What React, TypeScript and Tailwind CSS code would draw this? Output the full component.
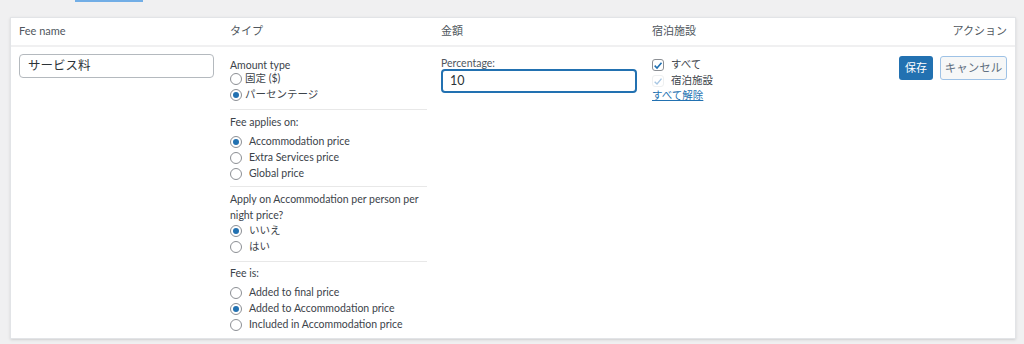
import React from 'react';

const font = { fontFamily: 'Lato, "Noto Sans CJK JP", sans-serif' };

function Radio({ checked, label, gap = 'gap-[7px]' }: { checked?: boolean; label: string; gap?: string }) {
  return (
    <label className={`flex items-center ${gap} h-4`}>
      <span className="w-[12px] h-[12px] rounded-full border border-[#8c8f94] bg-white flex items-center justify-center shrink-0">
        {checked && <span className="w-[6px] h-[6px] rounded-full bg-[#2271b1]" />}
      </span>
      <span>{label}</span>
    </label>
  );
}

function Group({
  title,
  children,
  cls,
  gap,
}: {
  title: React.ReactNode;
  children: React.ReactNode;
  cls: string;
  gap: string;
}) {
  return (
    <div className={cls}>
      <div className={`leading-4 whitespace-nowrap ${gap}`}>{title}</div>
      {children}
    </div>
  );
}

export default function App() {
  return (
    <div className="w-[1024px] h-[344px] bg-[#f0f0f1] text-[10.5px] text-[#3c434a] overflow-hidden" style={font}>
      <div className="h-[17px] pl-[75px]">
        <div className="w-[68px] h-[2px] bg-[#72aee6]" />
      </div>
      <div className="mx-[10px] w-[1006px] bg-white border border-[#e2e4e7] shadow-sm">
        <div className="grid grid-cols-[211px_211px_211px_211px_1fr] h-[29px] items-center border-b-2 border-[#f0f0f1] text-[11px] text-[#50575e]">
          <div className="px-2">Fee name</div>
          <div className="px-2">タイプ</div>
          <div className="px-2">金額</div>
          <div className="px-2">宿泊施設</div>
          <div className="px-2 text-right">アクション</div>
        </div>
        <div className="grid grid-cols-[211px_211px_211px_211px_1fr] pt-[7px] pb-[5px]">
          <div className="px-2">
            <div className="w-[195px] h-[24px] border border-[#b4b9be] rounded-[4px] flex items-center px-2 text-[12.5px] text-[#2c3338]">
              サービス料
            </div>
          </div>
          <div className="px-2 pt-[3px] w-[213px]">
            <Group title="Amount type" gap="-mb-[2px]" cls="pb-[6px] border-b border-[#e8e8e8]">
              <Radio label="固定 ($)" gap="gap-[3px]" />
              <Radio checked label="パーセンテージ" gap="gap-[3px]" />
            </Group>
            <Group title="Fee applies on:" gap="mb-[4px]" cls="pt-[4px] pb-[4px] border-b border-[#e8e8e8]">
              <Radio checked label="Accommodation price" />
              <Radio label="Extra Services price" />
              <Radio label="Global price" />
            </Group>
            <Group
              title={<>Apply on Accommodation per person per<br />night price?</>}
              gap=""
              cls="pt-[4px] pb-[6px] border-b border-[#e8e8e8]"
            >
              <Radio checked label="いいえ" />
              <Radio label="はい" />
            </Group>
            <Group title="Fee is:" gap="mb-[4px]" cls="pt-[3px]">
              <Radio label="Added to final price" />
              <Radio checked label="Added to Accommodation price" />
              <Radio label="Included in Accommodation price" />
            </Group>
          </div>
          <div className="px-2 pt-[2px]">
            <div className="leading-[14px] text-[#50575e]">Percentage:</div>
            <div className="-mt-[1px] w-[196px] h-[24px] border-2 border-[#2271b1] rounded-[4px] flex items-center px-[7px] text-[12.5px] text-[#2c3338]">
              10
            </div>
          </div>
          <div className="px-2 pt-[3px]">
            <label className="flex items-center gap-[7px] h-[16px]">
              <span className="w-[12px] h-[12px] border border-[#8c8f94] rounded-[3px] flex items-center justify-center">
                <svg viewBox="0 0 12 12" className="w-[11px] h-[11px]">
                  <path d="M2 6.2 L4.8 9 L10.2 2.6" fill="none" stroke="#2271b1" strokeWidth="1.9" />
                </svg>
              </span>
              <span>すべて</span>
            </label>
            <label className="flex items-center gap-[7px] h-[16px]">
              <span className="w-[12px] h-[12px] border border-[#eef0f1] rounded-[3px] flex items-center justify-center">
                <svg viewBox="0 0 12 12" className="w-[11px] h-[11px]">
                  <path d="M2 6.2 L4.8 9 L10.2 2.6" fill="none" stroke="#a7c6e3" strokeWidth="1.6" />
                </svg>
              </span>
              <span>宿泊施設</span>
            </label>
            <a className="block -mt-[2px] leading-4 text-[#2271b1] underline">すべて解除</a>
          </div>
          <div className="px-2 pt-[2px] flex justify-end gap-[7px] items-start">
            <button className="w-[34px] h-[24px] rounded-[3px] bg-[#2271b1] text-white text-[11px]">保存</button>
            <button className="w-[67px] h-[24px] rounded-[3px] border border-[#9ec2e6] bg-[#f6f7f7] text-[#5f6f80] text-[11.5px]">キャンセル</button>
          </div>
        </div>
      </div>
    </div>
  );
}
